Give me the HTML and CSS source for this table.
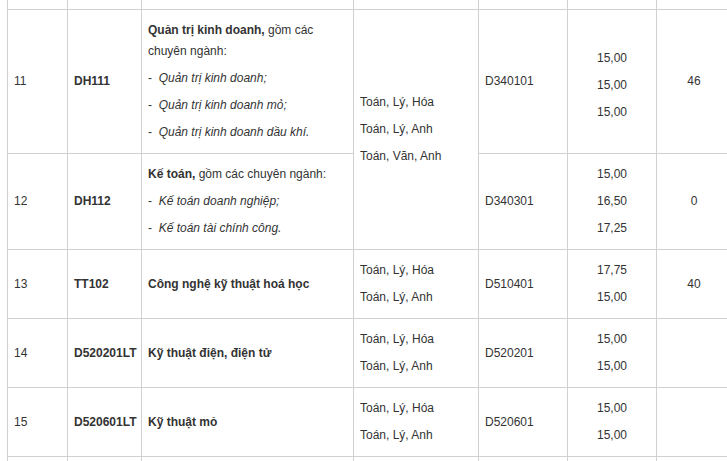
FILE: index.html
```html
<!DOCTYPE html>
<html lang="vi">
<head>
<meta charset="utf-8">
<title>Bảng ngành tuyển sinh</title>
<link rel="stylesheet" href="styles.css">
</head>
<body>
<div class="sheet">
<table class="grid">
  <colgroup>
    <col class="w-stt"><col class="w-code"><col class="w-major"><col class="w-block"><col class="w-mcode"><col class="w-score"><col class="w-quota">
  </colgroup>
  <tbody>
    <tr class="cut">
      <td></td><td></td><td></td><td></td><td></td><td></td><td></td>
    </tr>
    <tr>
      <td>11</td>
      <td class="strong">DH111</td>
      <td>
        <p><b>Quản trị kinh doanh,</b> gồm các chuyên ngành:</p>
        <p>-&nbsp; <i>Quản trị kinh doanh;</i></p>
        <p>-&nbsp; <i>Quản trị kinh doanh mỏ;</i></p>
        <p>-&nbsp; <i>Quản trị kinh doanh dầu khí.</i></p>
      </td>
      <td rowspan="2">
        <p>Toán, Lý, Hóa</p>
        <p>Toán, Lý, Anh</p>
        <p>Toán, Văn, Anh</p>
      </td>
      <td>D340101</td>
      <td class="center shift">
        <p>15,00</p>
        <p>15,00</p>
        <p>15,00</p>
      </td>
      <td class="center">46</td>
    </tr>
    <tr>
      <td>12</td>
      <td class="strong">DH112</td>
      <td>
        <p><b>Kế toán,</b> gồm các chuyên ngành:</p>
        <p>-&nbsp; <i>Kế toán doanh nghiệp;</i></p>
        <p>-&nbsp; <i>Kế toán tài chính công.</i></p>
      </td>
      <td>D340301</td>
      <td class="center">
        <p>15,00</p>
        <p>16,50</p>
        <p>17,25</p>
      </td>
      <td class="center">0</td>
    </tr>
    <tr>
      <td>13</td>
      <td class="strong">TT102</td>
      <td class="strong">Công nghệ kỹ thuật hoá học</td>
      <td>
        <p>Toán, Lý, Hóa</p>
        <p>Toán, Lý, Anh</p>
      </td>
      <td>D510401</td>
      <td class="center">
        <p>17,75</p>
        <p>15,00</p>
      </td>
      <td class="center">40</td>
    </tr>
    <tr>
      <td>14</td>
      <td class="strong">D520201LT</td>
      <td class="strong">Kỹ thuật điện, điện tử</td>
      <td>
        <p>Toán, Lý, Hóa</p>
        <p>Toán, Lý, Anh</p>
      </td>
      <td>D520201</td>
      <td class="center">
        <p>15,00</p>
        <p>15,00</p>
      </td>
      <td class="center"></td>
    </tr>
    <tr>
      <td>15</td>
      <td class="strong">D520601LT</td>
      <td class="strong">Kỹ thuật mỏ</td>
      <td>
        <p>Toán, Lý, Hóa</p>
        <p>Toán, Lý, Anh</p>
      </td>
      <td>D520601</td>
      <td class="center">
        <p>15,00</p>
        <p>15,00</p>
      </td>
      <td class="center"></td>
    </tr>
    <tr class="next">
      <td></td><td></td><td></td><td></td><td></td><td></td><td></td>
    </tr>
  </tbody>
</table>
</div>
</body>
</html>
```

FILE: styles.css
```css
html, body {
  margin: 0;
  padding: 0;
  background: #ffffff;
  overflow: hidden;
}

body {
  font-family: "Liberation Sans", Arial, sans-serif;
  font-size: 12px;
  line-height: 21px;
  color: #333333;
}

.sheet {
  padding-left: 7px;
}

.grid {
  border-collapse: collapse;
  table-layout: fixed;
  width: 725px;
}

.w-stt { width: 60px; }
.w-code { width: 74px; }
.w-major { width: 212px; }
.w-block { width: 125px; }
.w-mcode { width: 89px; }
.w-score { width: 89px; }
.w-quota { width: 75px; }

.grid td {
  border: 1px solid #d0d0d0;
  padding: 10px 6px;
  vertical-align: middle;
  text-align: left;
}

.grid p {
  margin: 0;
}

.grid p + p {
  margin-top: 6px;
}

.grid .cut td {
  border-top: none;
  height: 9px;
  padding: 0;
}

.grid .next td {
  height: 40px;
}

.strong {
  font-weight: bold;
}

.grid td.center {
  text-align: center;
}

.grid td.shift {
  padding-top: 14px;
  padding-bottom: 6px;
}
```
